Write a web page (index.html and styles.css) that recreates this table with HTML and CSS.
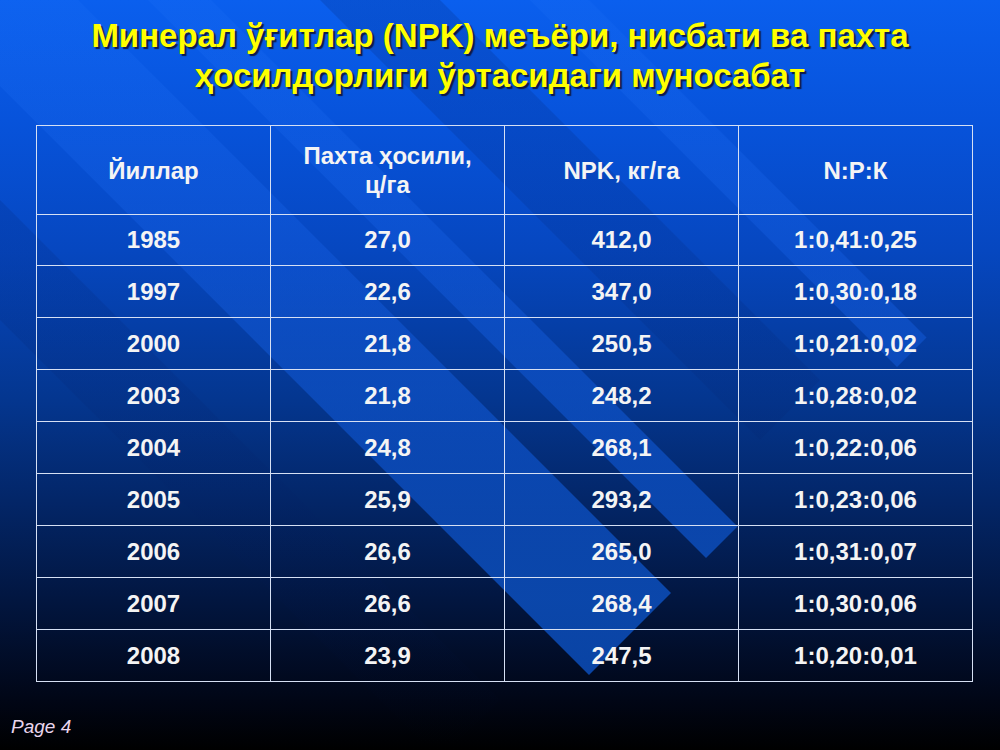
FILE: index.html
```html
<!DOCTYPE html>
<html lang="uz">
<head>
<meta charset="utf-8">
<title>Page 4</title>
<link rel="stylesheet" href="styles.css">
</head>
<body>
<div class="slide">
  <svg class="stripes" width="1000" height="750" viewBox="0 0 1000 750" aria-hidden="true">
    <defs>
      <linearGradient id="stripe" gradientUnits="userSpaceOnUse" x1="0" y1="0" x2="0" y2="750">
        <stop offset="0" stop-color="#2a7cff" stop-opacity="0.12"/>
        <stop offset="0.35" stop-color="#1a66ee" stop-opacity="0.3"/>
        <stop offset="0.6" stop-color="#0f58d6" stop-opacity="0.6"/>
        <stop offset="0.8" stop-color="#0c4fbd" stop-opacity="0.85"/>
        <stop offset="1" stop-color="#0a48b0" stop-opacity="0.9"/>
      </linearGradient>
      <linearGradient id="dark" gradientUnits="userSpaceOnUse" x1="0" y1="0" x2="0" y2="750">
        <stop offset="0" stop-color="#001a60" stop-opacity="0.18"/>
        <stop offset="0.5" stop-color="#001a60" stop-opacity="0.12"/>
        <stop offset="1" stop-color="#001a60" stop-opacity="0"/>
      </linearGradient>
    </defs>
    <polygon points="-143,-57 -61,-139 671,593 589,675" fill="url(#stripe)"/>
    <polygon points="-26,-174 5.5,-205.5 737.5,526.5 706,558" fill="url(#stripe)"/>
    <polygon points="165,-365 194.5,-394.5 926.5,337.5 897,367" fill="url(#stripe)"/>
    <polygon points="60,-260 120,-320 820,380 760,440" fill="url(#dark)"/>
    <polygon points="-260,60 -200,0 500,700 440,760" fill="url(#dark)"/>
  </svg>
  <div class="content">
    <h1 class="title">Минерал ўғитлар (NPK) меъёри, нисбати ва пахта<br>ҳосилдорлиги ўртасидаги муносабат</h1>
    <table class="data">
      <thead>
        <tr>
          <th>Йиллар</th>
          <th>Пахта ҳосили,<br>ц/га</th>
          <th>NPK, кг/га</th>
          <th>N:P:К</th>
        </tr>
      </thead>
      <tbody>
        <tr class="first"><td>1985</td><td>27,0</td><td>412,0</td><td>1:0,41:0,25</td></tr>
        <tr><td>1997</td><td>22,6</td><td>347,0</td><td>1:0,30:0,18</td></tr>
        <tr><td>2000</td><td>21,8</td><td>250,5</td><td>1:0,21:0,02</td></tr>
        <tr><td>2003</td><td>21,8</td><td>248,2</td><td>1:0,28:0,02</td></tr>
        <tr><td>2004</td><td>24,8</td><td>268,1</td><td>1:0,22:0,06</td></tr>
        <tr><td>2005</td><td>25,9</td><td>293,2</td><td>1:0,23:0,06</td></tr>
        <tr><td>2006</td><td>26,6</td><td>265,0</td><td>1:0,31:0,07</td></tr>
        <tr><td>2007</td><td>26,6</td><td>268,4</td><td>1:0,30:0,06</td></tr>
        <tr><td>2008</td><td>23,9</td><td>247,5</td><td>1:0,20:0,01</td></tr>
      </tbody>
    </table>
    <div class="page">Page 4</div>
  </div>
</div>
</body>
</html>
```
FILE: styles.css
```css
html, body {
  margin: 0;
  padding: 0;
}
body {
  width: 1000px;
  height: 750px;
  overflow: hidden;
  font-family: "Liberation Sans", Arial, sans-serif;
}
.slide {
  position: relative;
  width: 1000px;
  height: 750px;
  background: linear-gradient(to bottom,
    #0a5fee 0px,
    #0753db 120px,
    #0647c0 250px,
    #04368f 400px,
    #032668 500px,
    #021640 600px,
    #010616 700px,
    #000000 750px);
  overflow: hidden;
}
.stripes {
  position: absolute;
  left: 0;
  top: 0;
}
.content {
  position: relative;
  display: flex;
  flex-direction: column;
  height: 750px;
}
.title {
  margin: 0;
  padding-top: 16px;
  font-size: 33px;
  line-height: 40px;
  font-weight: bold;
  text-align: center;
  color: #ffff00;
  text-shadow: 2px 2px 1px rgba(15, 15, 45, 0.85);
}
.data {
  margin: 29px 0 0 36px;
  width: 937px;
  border-collapse: collapse;
  table-layout: fixed;
  color: #f4f4f4;
  font-size: 24px;
  font-weight: bold;
}
.data th, .data td {
  border: 1px solid #d6e0f4;
  text-align: center;
  vertical-align: middle;
  padding: 0;
}
.data th {
  height: 88px;
  font-weight: bold;
  line-height: 29px;
}
.data td {
  height: 51px;
  line-height: 28px;
}
.data tr.first td {
  height: 50px;
}
.page {
  margin-top: auto;
  padding: 0 0 12px 11px;
  font-size: 19px;
  font-style: italic;
  color: #ead6ee;
  line-height: 22px;
}
```
